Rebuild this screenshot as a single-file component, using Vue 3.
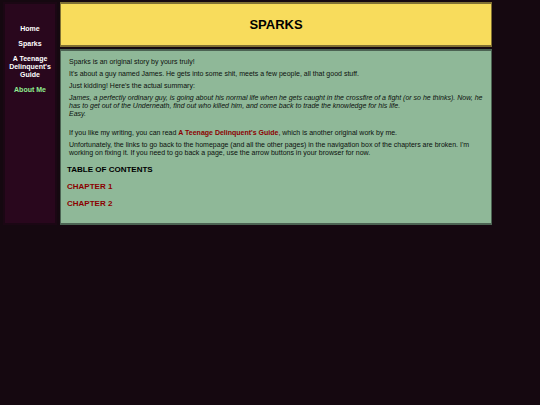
<script setup>
const links = [
  { label: 'Home', href: '#home' },
  { label: 'Sparks', href: '#sparks' },
  { label: "A Teenage Delinquent's Guide", href: '#guide' },
  { label: 'About Me', href: '#about', accent: true },
]
const chapters = ['CHAPTER 1', 'CHAPTER 2']
</script>

<template>
  <div class="page">
    <nav class="sidebar">
      <a v-for="link in links" :key="link.href" :href="link.href" :class="{ accent: link.accent }">{{ link.label }}</a>
    </nav>
    <div class="main">
      <header class="banner">
        <h1>SPARKS</h1>
      </header>
      <main class="content">
        <div class="story">
          <p>Sparks is an original story by yours truly!</p>
          <p>It's about a guy named James. He gets into some shit, meets a few people, all that good stuff.</p>
          <p>Just kidding! Here's the actual summary:</p>
          <p class="summary">
            James, a perfectly ordinary guy, is going about his normal life when he gets caught in the crossfire of a fight (or so he thinks). Now, he has
            to get out of the Underneath, find out who killed him, and come back to trade the knowledge for his life.<br>
            Easy.
          </p>
          <p>If you like my writing, you can read <a href="#guide">A Teenage Delinquent's Guide</a>, which is another original work by me.</p>
          <p>
            Unfortunately, the links to go back to the homepage (and all the other pages) in the navigation box of the chapters are broken. I'm working
            on fixing it. If you need to go back a page, use the arrow buttons in your browser for now.
          </p>
        </div>
        <h2>TABLE OF CONTENTS</h2>
        <h2 v-for="chapter in chapters" :key="chapter"><a href="#chapter">{{ chapter }}</a></h2>
      </main>
    </div>
  </div>
</template>

<style>
body {
  margin: 0;
  background: #150810;
}
</style>

<style scoped>
.page {
  display: grid;
  grid-template-columns: 1fr 8fr;
  gap: 3px;
  padding: 2px 48px 0 3px;
  font-family: "Liberation Sans", Arial, sans-serif;
  font-size: 7px;
  line-height: 8px;
  color: #0c100d;
}
.sidebar {
  display: flex;
  flex-direction: column;
  gap: 7px;
  padding: 21px 3px;
  border: 2px solid #1b0714;
  background: #29071d;
  text-align: center;
}
.sidebar a {
  color: #fff;
  font-weight: bold;
  text-decoration: none;
}
.sidebar .accent {
  color: #90ee90;
}
.main {
  display: flex;
  flex-direction: column;
  gap: 2px;
  min-width: 0;
}
.banner {
  padding: 12px 0;
  border: solid #807033;
  border-width: 2px 1px;
  background: #f8dc5c;
  text-align: center;
}
h1 {
  margin: 0;
  font-size: 13px;
  line-height: 17px;
  color: #000;
}
.content {
  padding: 7px 2px 15px 6px;
  border: solid #4c6353;
  border-width: 2px 1px;
  background: #8fb898;
}
.story {
  padding: 0 0 0 2px;
}
p {
  margin: 0 0 4px;
}
.summary {
  margin-bottom: 11px;
  font-style: italic;
}
a {
  color: #8b0000;
  font-weight: bold;
  text-decoration: none;
}
h2 {
  margin: 9px 0 0;
  font-size: 8px;
  line-height: 8px;
  color: #000;
}
</style>
